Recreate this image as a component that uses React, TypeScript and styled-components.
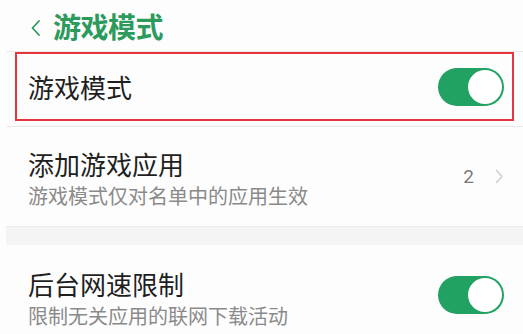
import React, { useState } from 'react';
import styled, { createGlobalStyle } from 'styled-components';

const GlobalStyle = createGlobalStyle`
  html, body {
    margin: 0;
    padding: 0;
    background: #fdfdfd;
  }
  body {
    font-family: "Noto Sans CJK SC", "Noto Sans", sans-serif;
    overflow: hidden;
  }
`;

const Page = styled.div`
  width: 523px;
  height: 334px;
  padding-left: 6px;
  box-sizing: border-box;
  background: #fdfdfd;
  overflow: hidden;
`;

const Header = styled.header`
  display: flex;
  align-items: center;
  gap: 11px;
  height: 51px;
  padding-left: 24px;
  color: #2b9a5c;
  border-bottom: 1px solid #e9e9e9;
`;

const HeaderTitle = styled.h1`
  margin: 0;
  font-size: 28px;
  line-height: 1;
  font-weight: 700;
  letter-spacing: -0.5px;
`;

const Highlight = styled.div`
  margin: 0 9px 5px 9px;
  border: 2px solid #e8353b;
`;

const Row = styled.div<{ $height: number }>`
  display: flex;
  align-items: center;
  justify-content: space-between;
  height: ${p => p.$height}px;
  box-sizing: border-box;
  padding: 0 19px 0 22px;
  background: #fdfdfd;
`;

const InnerRow = styled(Row)`
  padding: 0 8px 0 11px;
`;

const Divider = styled.div`
  height: 1px;
  background: #e9e9e9;
`;

const SectionGap = styled.div`
  height: 18px;
  background: #f4f4f4;
  border-top: 1px solid #ececec;
`;

const TextBlock = styled.div<{ $shift?: number }>`
  display: flex;
  flex-direction: column;
  gap: 2px;
  margin-top: ${p => p.$shift ?? 0}px;
`;

const Title = styled.div`
  font-size: 26px;
  line-height: 32px;
  color: #1f1f1f;
`;

const Subtitle = styled.div`
  font-size: 20px;
  line-height: 28px;
  color: #8a8a8a;
`;

const Trailing = styled.div`
  display: flex;
  align-items: center;
  gap: 21px;
  color: #7a7a7a;
  font-family: "Roboto", "Noto Sans", sans-serif;
  font-size: 19px;
`;

const SwitchTrack = styled.button<{ $on: boolean }>`
  position: relative;
  width: 66px;
  height: 38px;
  border: none;
  padding: 0;
  border-radius: 19px;
  background: ${p => (p.$on ? '#22a262' : '#d0d0d0')};
  cursor: pointer;
`;

const SwitchKnob = styled.span<{ $on: boolean }>`
  position: absolute;
  top: 2px;
  left: ${p => (p.$on ? '30px' : '2px')};
  width: 34px;
  height: 34px;
  border-radius: 50%;
  background: #ffffff;
  transition: left 0.2s;
`;

const Switch = ({ initial }: { initial: boolean }) => {
  const [on, setOn] = useState(initial);
  return (
    <SwitchTrack $on={on} onClick={() => setOn(!on)}>
      <SwitchKnob $on={on} />
    </SwitchTrack>
  );
};

const BackArrow = () => (
  <svg width="12" height="18" viewBox="0 0 12 18" style={{ marginTop: 4 }}>
    <polyline points="9,2 2.5,9 9,16" fill="none" stroke="#2b9a5c" strokeWidth="1.8" strokeLinecap="round" strokeLinejoin="round" />
  </svg>
);

const Chevron = () => (
  <svg width="9" height="15" viewBox="0 0 9 15">
    <polyline points="1.5,1.5 7,7.5 1.5,13.5" fill="none" stroke="#cfcfcf" strokeWidth="1.6" strokeLinecap="round" strokeLinejoin="round" />
  </svg>
);

export default function App() {
  return (
    <>
      <GlobalStyle />
      <Page>
        <Header>
          <BackArrow />
          <HeaderTitle>游戏模式</HeaderTitle>
        </Header>

        <Highlight>
          <InnerRow $height={65}>
            <Title>游戏模式</Title>
            <Switch initial />
          </InnerRow>
        </Highlight>

        <Divider />

        <Row $height={99}>
          <TextBlock $shift={4}>
            <Title>添加游戏应用</Title>
            <Subtitle>游戏模式仅对名单中的应用生效</Subtitle>
          </TextBlock>
          <Trailing>
            <span>2</span>
            <Chevron />
          </Trailing>
        </Row>

        <SectionGap />

        <Row $height={100}>
          <TextBlock $shift={8}>
            <Title>后台网速限制</Title>
            <Subtitle>限制无关应用的联网下载活动</Subtitle>
          </TextBlock>
          <Switch initial />
        </Row>
      </Page>
    </>
  );
}
